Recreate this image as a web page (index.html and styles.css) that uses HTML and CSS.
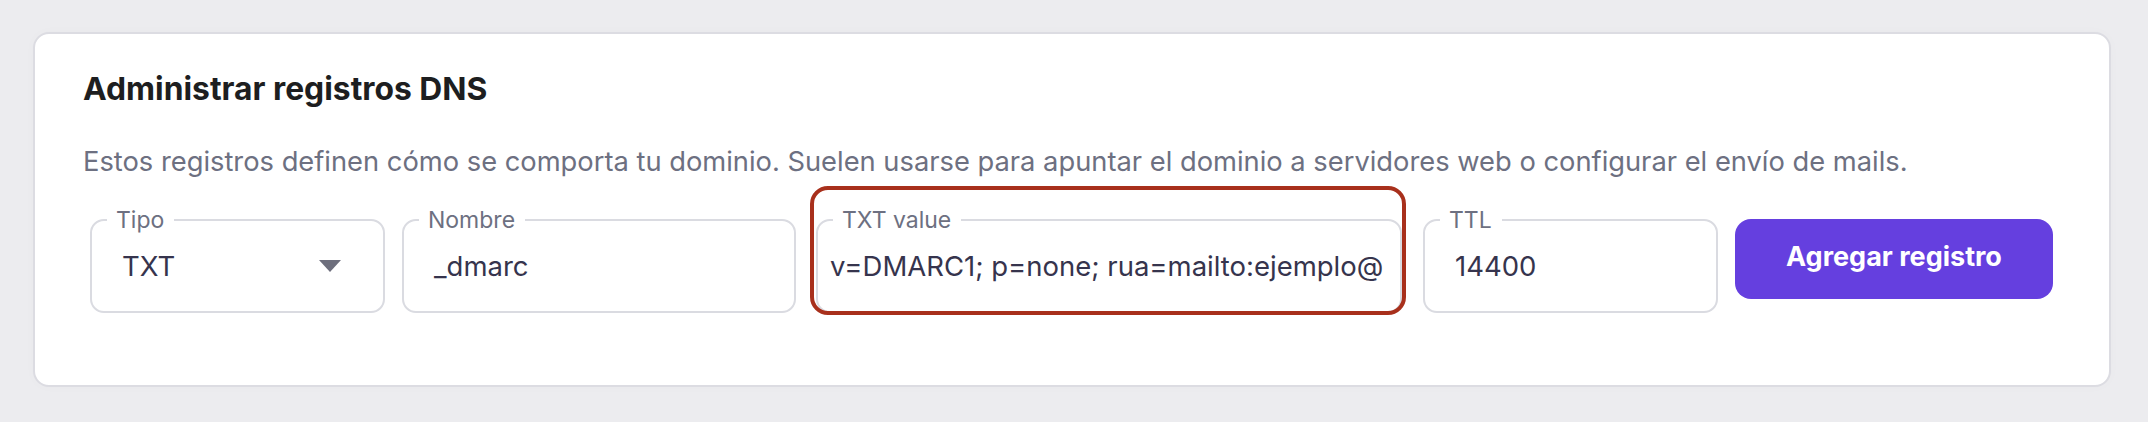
FILE: index.html
```html
<!DOCTYPE html>
<html lang="es">
<head>
<meta charset="utf-8">
<title>Administrar registros DNS</title>
<link rel="stylesheet" href="styles.css">
</head>
<body>
  <section class="card">
    <h2 class="card-title">Administrar registros DNS</h2>
    <p class="card-desc">Estos registros definen cómo se comporta tu dominio. Suelen usarse para apuntar el dominio a servidores web o configurar el envío de mails.</p>
    <form class="record-row">
      <fieldset class="field field-type">
        <legend class="field-label">Tipo</legend>
        <span class="field-value">TXT</span>
        <span class="caret"></span>
      </fieldset>
      <fieldset class="field field-name">
        <legend class="field-label">Nombre</legend>
        <span class="field-value">_dmarc</span>
      </fieldset>
      <div class="highlight-wrap">
        <fieldset class="field field-txt">
          <legend class="field-label">TXT value</legend>
          <span class="field-value clip">v=DMARC1; p=none; rua=mailto:ejemplo@</span>
        </fieldset>
        <span class="highlight"></span>
      </div>
      <fieldset class="field field-ttl">
        <legend class="field-label">TTL</legend>
        <span class="field-value">14400</span>
      </fieldset>
      <button type="button" class="btn-primary">Agregar registro</button>
    </form>
  </section>
</body>
</html>
```

FILE: styles.css
```css
* { box-sizing: border-box; }

html, body {
  margin: 0;
  background: #ececef;
}

body {
  padding: 32px 37px 35px 33px;
  font-family: "Inter", "DejaVu Sans", sans-serif;
}

.card {
  background: #ffffff;
  border: 2px solid #dcdce2;
  border-radius: 16px;
  height: 355px;
  padding: 35px 48px 0 48px;
  box-shadow: 0 0 12px rgba(0, 0, 0, 0.02);
}

.card-title {
  margin: 0;
  font-size: 31.8px;
  line-height: 40px;
  font-weight: 700;
  color: #1d1e20;
}

.card-desc {
  margin: 35px 0 0 0;
  font-size: 27.3px;
  line-height: 36px;
  color: #6d7081;
}

.record-row {
  display: flex;
  align-items: flex-start;
  gap: 17px;
  margin-top: 28px;
  padding-left: 7px;
}

.field {
  margin: 0;
  height: 105px;
  border: 2px solid #dadbe1;
  border-radius: 14px;
  padding: 0 30px 12px 30px;
  display: flex;
  align-items: center;
  min-width: 0;
}

.field-label {
  margin-left: -15px;
  padding: 0 10px 0 9px;
  font-size: 23px;
  line-height: 24px;
  color: #6d7081;
}

.field-value {
  font-size: 27.5px;
  line-height: 36px;
  color: #36344d;
  white-space: nowrap;
}

.field-type { width: 295px; padding-right: 42px; }
.field-name { width: 394px; }
.field-ttl { width: 295px; }

.caret {
  margin-left: auto;
  width: 0;
  height: 0;
  border-left: 11px solid transparent;
  border-right: 11px solid transparent;
  border-top: 12px solid #6d6e7c;
}

.highlight-wrap {
  position: relative;
  margin: 0 4px 0 3px;
}

.field-txt {
  width: 586px;
  padding: 0 14px 12px 12px;
}
.field-txt .field-label { margin-left: 3px; }

.clip {
  display: block;
  flex: 1;
  min-width: 0;
  overflow: hidden;
}

.highlight {
  position: absolute;
  top: -22px;
  left: -6px;
  right: -4px;
  bottom: -2px;
  border: 4px solid #a8301c;
  border-radius: 18px;
  pointer-events: none;
}

.btn-primary {
  margin-top: 11px;
  width: 318px;
  height: 80px;
  border: 0;
  border-radius: 16px;
  background: #653fdf;
  color: #ffffff;
  font-family: inherit;
  font-size: 27px;
  font-weight: 700;
  padding: 0 0 6px;
}
```
